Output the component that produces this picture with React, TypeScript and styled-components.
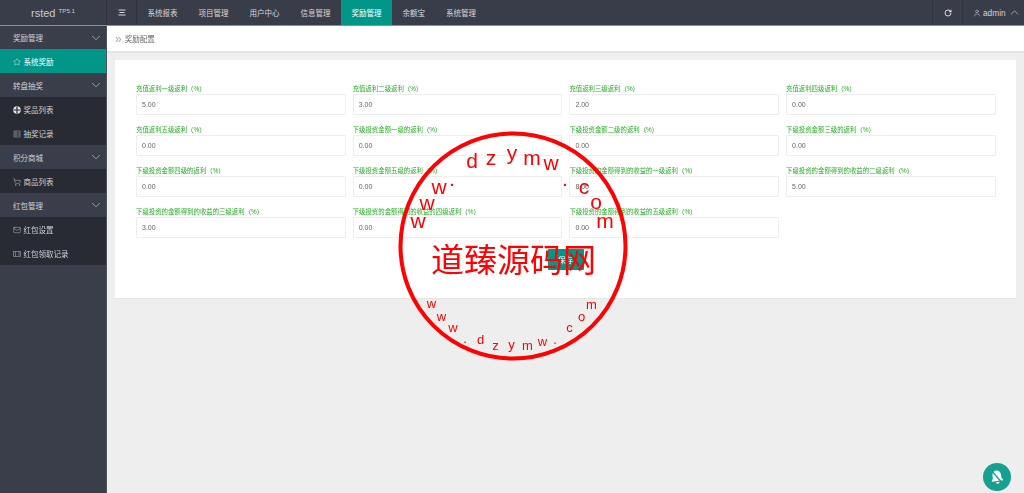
import React from 'react';
import styled, { createGlobalStyle } from 'styled-components';
import { ChevronDown, ChevronUp, Star, ShoppingCart, Mail, User, RotateCw } from 'lucide-react';

const GlobalStyle = createGlobalStyle`
	html, body {
		margin: 0;
		padding: 0;
		height: 100%;
		overflow: hidden;
		background: #eeeeee;
		font-family: "Liberation Sans", "Noto Sans CJK SC", sans-serif;
	}
	* {
		box-sizing: border-box;
	}
`;

const Page = styled.div`
	position: relative;
	width: 1024px;
	height: 493px;
	overflow: hidden;
	opacity: 0.999;
`;

const Header = styled.header`
	height: 26px;
	display: flex;
	align-items: stretch;
	background: #393d49;
	border-bottom: 1px solid #8d9098;
	color: #d5d6d9;
	font-size: 7.5px;
`;

const Logo = styled.div`
	width: 107px;
	display: flex;
	justify-content: center;
	align-items: center;
	font-size: 11px;
	color: #c9cbd0;
	border-right: 1px solid #2f323c;

	sup {
		font-size: 6.2px;
		margin-left: 3px;
		position: relative;
		top: -2px;
	}
`;

const MenuToggle = styled.div`
	width: 30px;
	display: flex;
	align-items: center;
	justify-content: center;
	border-right: 1px solid #2f323c;
`;

const TopLink = styled.div<{ $active?: boolean }>`
	padding: 0 10.5px;
	display: flex;
	align-items: center;
	background: ${({ $active }) => ($active ? '#009688' : 'transparent')};
	color: ${({ $active }) => ($active ? '#ffffff' : '#d5d6d9')};
`;

const HeaderRight = styled.div`
	margin-left: auto;
	display: flex;
`;

const RefreshCell = styled.div`
	width: 30px;
	display: flex;
	align-items: center;
	justify-content: center;
	border-left: 1px solid #30343e;
	color: #ffffff;
`;

const UserCell = styled.div`
	width: 62px;
	display: flex;
	align-items: center;
	gap: 2px;
	padding-left: 10px;
	border-left: 1px solid #30343e;
	font-size: 8.3px;
`;

const Body = styled.div`
	display: flex;
	height: 467px;
`;

const Sidebar = styled.aside`
	width: 107px;
	flex: none;
	background: #3a3e4a;
	border-right: 1px solid #50535e;
	color: #d0d1d5;
	font-size: 7.5px;
`;

const GroupTitle = styled.div`
	height: 24px;
	display: flex;
	align-items: center;
	justify-content: space-between;
	padding: 0 3.5px 0 13px;
	background: #3a3e4a;

	&:first-child {
		height: 23.4px;
	}
`;

const SideItem = styled.div<{ $active?: boolean }>`
	height: 24px;
	display: flex;
	align-items: center;
	gap: 2.5px;
	padding-left: 13px;
	background: ${({ $active }) => ($active ? '#009688' : '#282b33')};
	color: ${({ $active }) => ($active ? '#ffffff' : '#d0d1d5')};

	svg {
		position: relative;
		top: 1px;
	}
`;

const Main = styled.main`
	flex: 1;
	min-width: 0;
`;

const Crumb = styled.div`
	height: 27px;
	display: flex;
	align-items: center;
	gap: 3px;
	padding: 0 0 1px 8px;
	background: #ffffff;
	border-bottom: 2px solid #e4e4e4;
	color: #666666;
	font-size: 7.5px;
`;

const CrumbMark = styled.span`
	color: #aaaaaa;
	font-size: 12px;
	line-height: 1;
	position: relative;
	top: 1px;
`;

const Card = styled.section`
	margin: 7px 8px 0;
	height: 239px;
	padding: 24px 21px 0;
	background: #ffffff;
	border-bottom: 1px solid #e6e6e6;
`;

const FieldGrid = styled.div`
	display: grid;
	grid-template-columns: repeat(4, 209.6px);
	column-gap: 7.1px;
	row-gap: 10px;
`;

const Field = styled.div`
	height: 31px;
`;

const FieldLabel = styled.label`
	display: block;
	height: 9px;
	line-height: 9px;
	margin-bottom: 1px;
	font-size: 6.4px;
	color: #22b022;
	white-space: nowrap;
`;

const FieldInput = styled.div`
	height: 21px;
	display: flex;
	align-items: center;
	padding-left: 5px;
	border: 1px solid #eeeeee;
	border-radius: 1px;
	font-size: 7px;
	color: #666666;
`;

const Actions = styled.div`
	display: flex;
	justify-content: center;
	margin-top: 11px;
`;

const SaveButton = styled.button`
	width: 36px;
	height: 21px;
	padding: 0;
	border: none;
	border-radius: 1px;
	background: #009688;
	color: #ffffff;
	font: inherit;
	font-size: 7.5px;
`;

const Stamp = styled.svg`
	position: absolute;
	left: 0;
	top: 0;
	pointer-events: none;
`;

const StampTitle = styled.text`
	font-family: "Noto Sans CJK SC", sans-serif;
	font-size: 33px;
	fill: #f00;
`;

const StampLetter = styled.text<{ $size: number }>`
	font-family: "Liberation Sans", sans-serif;
	font-size: ${({ $size }) => $size}px;
	fill: #f00;
	text-anchor: middle;
`;

const BellBadge = styled.div`
	position: absolute;
	right: 13px;
	bottom: 2px;
	width: 28px;
	height: 28px;
	border-radius: 50%;
	background: #16a08f;
	display: flex;
	align-items: center;
	justify-content: center;
`;

const topLinks = ['系统报表', '项目管理', '用户中心', '信息管理', '奖励管理', '余额宝', '系统管理'];

const fields = [
	['充值返利一级返利（%）', '5.00'],
	['充值返利二级返利（%）', '3.00'],
	['充值返利三级返利（%）', '2.00'],
	['充值返利四级返利（%）', '0.00'],
	['充值返利五级返利（%）', '0.00'],
	['下级投资金额一级的返利（%）', '0.00'],
	['下级投资金额二级的返利（%）', '0.00'],
	['下级投资金额三级的返利（%）', '0.00'],
	['下级投资金额四级的返利（%）', '0.00'],
	['下级投资金额五级的返利（%）', '0.00'],
	['下级投资的金额得到的收益的一级返利（%）', '8.00'],
	['下级投资的金额得到的收益的二级返利（%）', '5.00'],
	['下级投资的金额得到的收益的三级返利（%）', '3.00'],
	['下级投资的金额得到的收益的四级返利（%）', '0.00'],
	['下级投资的金额得到的收益的五级返利（%）', '0.00'],
];

const stampLetters: [string, number, number, number][] = [
	['d', 472, 167.5, 21],
	['z', 491, 164.5, 21],
	['y', 512, 160, 21],
	['m', 532, 164.5, 21],
	['w', 551, 170, 21],
	['.', 452, 186, 21],
	['w', 439, 193.5, 21],
	['w', 427, 210, 21],
	['w', 418, 228, 21],
	['.', 565, 186, 21],
	['c', 584, 193.5, 21],
	['o', 596, 209, 21],
	['m', 605, 228, 21],
	['w', 431.5, 308, 13],
	['w', 441.5, 320.5, 13],
	['w', 453, 331.5, 13],
	['.', 465, 342.5, 13],
	['d', 480.5, 344, 13],
	['z', 495.5, 350, 13],
	['y', 511.5, 349, 13],
	['m', 527.5, 350, 13],
	['w', 542.5, 345.5, 13],
	['.', 555, 343.5, 13],
	['c', 569.5, 331.5, 13],
	['o', 581.5, 321, 13],
	['m', 591.5, 309, 13],
];

const PrizeIcon = () => (
	<svg width="8" height="8" viewBox="0 0 8 8">
		<circle cx="4" cy="4" r="3.8" fill="#e2e3e6" />
		<path d="M3.4 0.5h1.2v7H3.4zM0.5 3.4h7v1.2h-7z" fill="#282b33" />
	</svg>
);

const RecordIcon = () => (
	<svg width="8" height="8" viewBox="0 0 8 8" fill="none" stroke="#85878d" strokeWidth="0.7">
		<rect x="1" y="1" width="6" height="6" />
		<path d="M1 3h6M1 5h6M3 1v6" />
	</svg>
);

const CardIcon = () => (
	<svg width="8" height="6" viewBox="0 0 8 6" fill="none" stroke="#85878d" strokeWidth="0.8">
		<rect x="0.5" y="0.5" width="7" height="5" />
		<path d="M2.5 0.5v5M5 2h2M5 4h2" />
	</svg>
);

const HamburgerIcon = () => (
	<svg width="8" height="7" viewBox="0 0 8 7" fill="none" stroke="#e6e7e9" strokeWidth="0.9">
		<path d="M0.5 1h7M1.5 3.5h5M0.5 6h7" />
	</svg>
);

const BellSlashIcon = () => (
	<svg width="18" height="18" viewBox="0 0 18 18">
		<g transform="rotate(-8 9 9)">
			<path d="M9 2.500c-2.800 0-4.300 2.100-4.300 4.800v2.700L3 13h12l-1.700-3V7.300c0-2.700-1.500-4.800-4.300-4.800z" fill="#ffffff" />
			<path d="M7.200 14h3.600a1.800 1.800 0 0 1-3.600 0z" fill="#ffffff" />
		</g>
		<path d="M3.500 2.500 14.500 15.500" stroke="#16a08f" strokeWidth="1.400" />
	</svg>
);

const Group = ({ title }: { title: string }) => (
	<GroupTitle>
		{title}
		<ChevronDown size={14} strokeWidth={1.2} color="#c0c2c6" />
	</GroupTitle>
);

export default function App() {
	return (
		<Page>
			<GlobalStyle />
			<Header>
				<Logo>
					rsted<sup>TP5.1</sup>
				</Logo>
				<MenuToggle>
					<HamburgerIcon />
				</MenuToggle>
				{topLinks.map((name) => (
					<TopLink key={name} $active={name === '奖励管理'}>
						{name}
					</TopLink>
				))}
				<HeaderRight>
					<RefreshCell>
						<RotateCw size={8} strokeWidth={2.4} />
					</RefreshCell>
					<UserCell>
						<User size={8} strokeWidth={1.5} />
						admin
						<ChevronUp size={13} strokeWidth={1.2} />
					</UserCell>
				</HeaderRight>
			</Header>
			<Body>
				<Sidebar>
					<Group title="奖励管理" />
					<SideItem $active>
						<Star size={8} strokeWidth={1.3} />
						系统奖励
					</SideItem>
					<Group title="转盘抽奖" />
					<SideItem>
						<PrizeIcon />
						奖品列表
					</SideItem>
					<SideItem>
						<RecordIcon />
						抽奖记录
					</SideItem>
					<Group title="积分商城" />
					<SideItem>
						<ShoppingCart size={8} strokeWidth={1.3} />
						商品列表
					</SideItem>
					<Group title="红包管理" />
					<SideItem>
						<Mail size={8} strokeWidth={1.3} />
						红包设置
					</SideItem>
					<SideItem>
						<CardIcon />
						红包领取记录
					</SideItem>
				</Sidebar>
				<Main>
					<Crumb>
						<CrumbMark>»</CrumbMark>
						奖励配置
					</Crumb>
					<Card>
						<FieldGrid>
							{fields.map(([label, value]) => (
								<Field key={label}>
									<FieldLabel>{label}</FieldLabel>
									<FieldInput>{value}</FieldInput>
								</Field>
							))}
						</FieldGrid>
						<Actions>
							<SaveButton>保存</SaveButton>
						</Actions>
					</Card>
				</Main>
			</Body>
			<Stamp width="1024" height="493" viewBox="0 0 1024 493">
				<circle cx="513" cy="246" r="112.5" fill="none" stroke="#f00" strokeWidth="4" />
				<StampTitle x="431" y="271.5">道臻源码网</StampTitle>
				{stampLetters.map(([ch, x, y, size], i) => (
					<StampLetter key={i} x={x} y={y} $size={size}>
						{ch}
					</StampLetter>
				))}
			</Stamp>
			<BellBadge>
				<BellSlashIcon />
			</BellBadge>
		</Page>
	);
}
